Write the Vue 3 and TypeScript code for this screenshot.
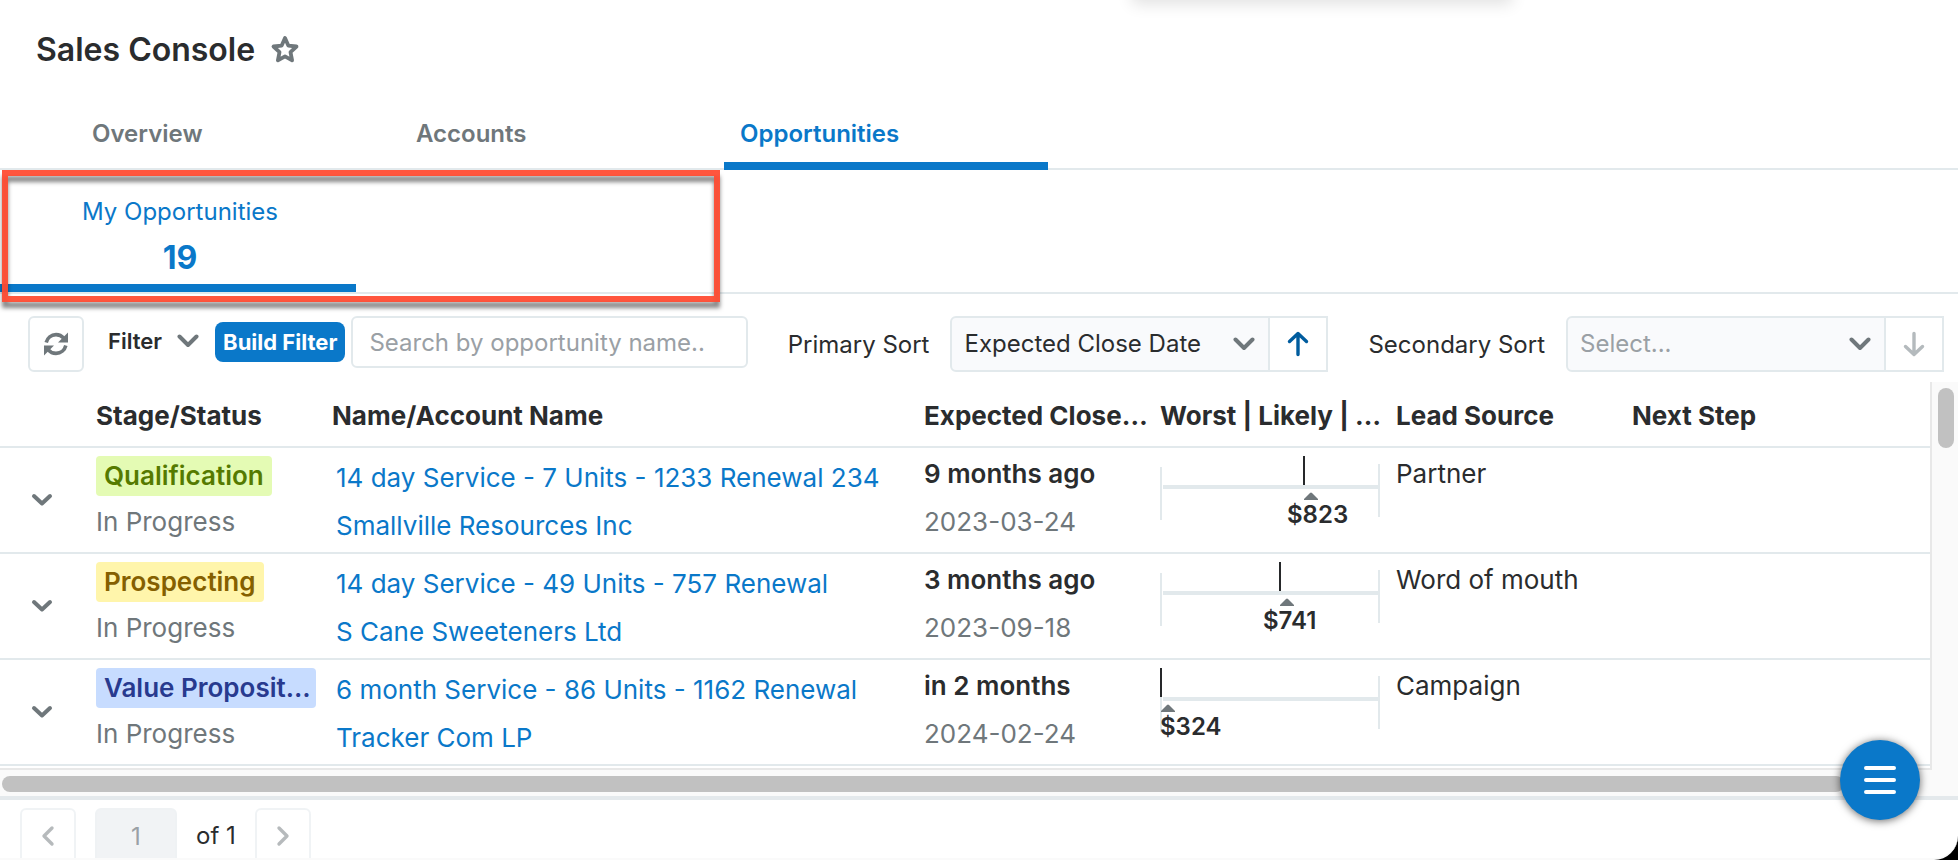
<script setup lang="ts">
import { ref } from 'vue'

interface Opportunity {
  id: number
  stage: string
  tone: 'green' | 'yellow' | 'blue'
  status: string
  name: string
  account: string
  due: string
  date: string
  likely: string
  tick: number
  labelX: number
  lead: string
}

const tabs = ['Overview', 'Accounts', 'Opportunities']
const activeTab = ref('Opportunities')
const search = ref('')
const primarySort = ref('close')
const secondarySort = ref('')
const page = ref('1')

const columns = ['Stage/Status', 'Name/Account Name', 'Expected Close…', 'Worst | Likely | …', 'Lead Source', 'Next Step']

const rows: Opportunity[] = [
  {
    id: 1, stage: 'Qualification', tone: 'green', status: 'In Progress',
    name: '14 day Service - 7 Units - 1233 Renewal 234', account: 'Smallville Resources Inc',
    due: '9 months ago', date: '2023-03-24', likely: '$823', tick: 143, labelX: 127, lead: 'Partner',
  },
  {
    id: 2, stage: 'Prospecting', tone: 'yellow', status: 'In Progress',
    name: '14 day Service - 49 Units - 757 Renewal', account: 'S Cane Sweeteners Ltd',
    due: '3 months ago', date: '2023-09-18', likely: '$741', tick: 119, labelX: 103, lead: 'Word of mouth',
  },
  {
    id: 3, stage: 'Value Proposit…', tone: 'blue', status: 'In Progress',
    name: '6 month Service - 86 Units - 1162 Renewal', account: 'Tracker Com LP',
    due: 'in 2 months', date: '2024-02-24', likely: '$324', tick: 0, labelX: 0, lead: 'Campaign',
  },
]
</script>

<template>
  <div class="console">
    <div class="top-shade"></div>
    <header class="title-bar">
      <h1>Sales Console</h1>
      <button class="star" aria-label="Add to favorites">
        <svg width="30" height="30" viewBox="0 0 30 30">
          <path d="M15 4l3.300 7.600 8.200.9-6 5.600 1.600 8.200L15 22.400l-7.100 3.900 1.600-8.200-6-5.600 8.200-.9z" fill="none" stroke="#6f777b" stroke-width="3.800" stroke-linejoin="round" />
        </svg>
      </button>
    </header>

    <nav class="tabs">
      <button v-for="t in tabs" :key="t" :class="['tab', { active: t === activeTab }]" @click="activeTab = t">{{ t }}</button>
    </nav>

    <section class="metrics">
      <button class="metric">
        <span class="metric-name">My Opportunities</span>
        <span class="metric-value">19</span>
      </button>
      <div class="highlight"></div>
    </section>

    <section class="toolbar">
      <button class="icon-btn refresh" aria-label="Refresh">
        <svg width="26" height="26" viewBox="0 0 26 26" fill="none" stroke="#6f777b" stroke-width="3.6">
          <path d="M3.2 11.5C4.300 6.800 8.200 3.600 13 3.600c3.200 0 5.800 1.300 7.700 3.600" />
          <path d="M25 1.500v10h-10z" fill="#6f777b" stroke="none" />
          <path d="M22.800 14.500c-1.100 4.700-5 7.900-9.800 7.900-3.200 0-5.800-1.300-7.700-3.600" />
          <path d="M1 24.500v-10h10z" fill="#6f777b" stroke="none" />
        </svg>
      </button>
      <button class="filter">
        Filter
        <svg width="22" height="14" viewBox="0 0 22 14"><path d="M2.500 2.500L11 11l8.500-8.500" fill="none" stroke="#6f777b" stroke-width="4" stroke-linecap="round" stroke-linejoin="round" /></svg>
      </button>
      <button class="build">Build Filter</button>
      <input v-model="search" class="search" type="text" aria-label="Search" placeholder="Search by opportunity name.." />
      <div class="sort">
        <label for="primary">Primary Sort</label>
        <div class="sort-group">
          <div class="select-wrap">
            <select id="primary" v-model="primarySort">
              <option value="close">Expected Close Date</option>
              <option value="name">Name</option>
            </select>
            <svg class="caret" width="22" height="14" viewBox="0 0 22 14"><path d="M2.500 2.500L11 11l8.500-8.500" fill="none" stroke="#6f777b" stroke-width="4" stroke-linecap="round" stroke-linejoin="round" /></svg>
          </div>
          <button class="direction" aria-label="Ascending">
            <svg width="22" height="26" viewBox="0 0 22 26" fill="none" stroke="#005c9e" stroke-width="3.400" stroke-linecap="round" stroke-linejoin="round"><path d="M11 23.500V3M2.500 10.500L11 2.500l8.500 8" /></svg>
          </button>
        </div>
      </div>
      <div class="sort">
        <label for="secondary">Secondary Sort</label>
        <div class="sort-group">
          <div class="select-wrap">
            <select id="secondary" v-model="secondarySort" class="empty">
              <option value="">Select...</option>
              <option value="name">Name</option>
            </select>
            <svg class="caret" width="22" height="14" viewBox="0 0 22 14"><path d="M2.500 2.500L11 11l8.500-8.500" fill="none" stroke="#6f777b" stroke-width="4" stroke-linecap="round" stroke-linejoin="round" /></svg>
          </div>
          <button class="direction" aria-label="Descending" disabled>
            <svg width="22" height="26" viewBox="0 0 22 26" fill="none" stroke="#b4babd" stroke-width="3.400" stroke-linecap="round" stroke-linejoin="round"><path d="M11 2.500V23M2.500 15.500l8.500 8 8.500-8" /></svg>
          </button>
        </div>
      </div>
    </section>

    <section class="grid">
      <div class="grid-body">
        <table>
          <colgroup>
            <col class="c-toggle" /><col class="c-std" /><col class="c-name" /><col class="c-std" /><col class="c-std" /><col class="c-std" /><col />
          </colgroup>
          <thead>
            <tr>
              <th aria-label="Expand"></th>
              <th v-for="c in columns" :key="c">{{ c }}</th>
            </tr>
          </thead>
          <tbody>
            <tr v-for="r in rows" :key="r.id">
              <td class="toggle-cell">
                <button class="toggle" aria-label="Expand row">
                  <svg width="22" height="14" viewBox="0 0 22 14"><path d="M3 3l8 7.500L19 3" fill="none" stroke="#6f777b" stroke-width="4" stroke-linecap="round" stroke-linejoin="round" /></svg>
                </button>
              </td>
              <td>
                <div class="stage"><span :class="['badge', r.tone]">{{ r.stage }}</span></div>
                <div class="muted status">{{ r.status }}</div>
              </td>
              <td class="name-cell">
                <a href="#">{{ r.name }}</a>
                <a href="#">{{ r.account }}</a>
              </td>
              <td>
                <div class="due">{{ r.due }}</div>
                <div class="muted">{{ r.date }}</div>
              </td>
              <td>
                <svg class="range" width="220" height="84" viewBox="0 0 220 84">
                  <path d="M0 19h2v53H0zM218 16h2v53h-2zM3 37h215v4H3z" fill="#e2e9ec" />
                  <rect :x="r.tick" y="8" width="2" height="29" fill="#26282a" />
                  <path :d="`M${r.tick + 1} 52v-1l6-6q1-1 2 0l6 6v1z`" fill="#6f777b" />
                  <text :x="r.labelX" y="75">{{ r.likely }}</text>
                </svg>
              </td>
              <td><div class="lead">{{ r.lead }}</div></td>
              <td></td>
            </tr>
          </tbody>
        </table>
      </div>
      <div class="v-track"><div class="v-thumb"></div></div>
      <div class="h-track"><div class="h-thumb"></div></div>
    </section>

    <footer class="pager">
      <button class="icon-btn faded" aria-label="Previous page" disabled>
        <svg width="14" height="22" viewBox="0 0 14 22"><path d="M11 3l-8 8 8 8" fill="none" stroke="#6f777b" stroke-width="3.400" stroke-linecap="round" stroke-linejoin="round" /></svg>
      </button>
      <input v-model="page" class="page-input" type="text" aria-label="Page" disabled />
      <span class="page-total">of 1</span>
      <button class="icon-btn faded" aria-label="Next page" disabled>
        <svg width="14" height="22" viewBox="0 0 14 22"><path d="M3 3l8 8-8 8" fill="none" stroke="#6f777b" stroke-width="3.400" stroke-linecap="round" stroke-linejoin="round" /></svg>
      </button>
    </footer>

    <button class="fab" aria-label="Open menu">
      <svg width="32" height="28" viewBox="0 0 32 28" stroke="#fff" stroke-width="4" stroke-linecap="round"><path d="M2 2h28M2 14h28M2 26h28" /></svg>
    </button>
  </div>
</template>

<style>
body {
  margin: 0;
  background: #000;
}
</style>

<style scoped>
.console {
  position: relative;
  display: flex;
  flex-direction: column;
  height: 100vh;
  box-sizing: border-box;
  overflow: hidden;
  background: #fff;
  border-bottom: 2px solid #fafafa;
  border-bottom-right-radius: 24px;
  color: #2a2c2e;
  font-family: Inter, 'Liberation Sans', sans-serif;
  font-size: 24px;
}
.console *,
.console *::before {
  box-sizing: border-box;
}
button,
input,
select {
  margin: 0;
  padding: 0;
  font: inherit;
  color: inherit;
  background: none;
  border: 0;
}
.top-shade {
  position: absolute;
  top: -24px;
  left: 58%;
  width: 19%;
  height: 20px;
  box-shadow: 0 4px 16px 4px rgba(0, 0, 0, 0.12);
}
.title-bar {
  display: flex;
  align-items: center;
  gap: 15px;
  height: 100px;
  padding: 0 36px 2px;
  flex: none;
}
h1 {
  margin: 0;
  font-size: 32px;
  font-weight: 600;
}
.star {
  display: flex;
}
.tabs {
  display: flex;
  flex: none;
  height: 70px;
  padding-left: 76px;
  border-bottom: 2px solid #e2e9ec;
}
.tab {
  width: 324px;
  height: 70px;
  padding: 4px 16px 0;
  border-bottom: 8px solid transparent;
  text-align: left;
  font-weight: 600;
  color: #6f777b;
}
.tab.active {
  color: #0a78c9;
  border-bottom-color: #0a78c9;
}
.metrics {
  position: relative;
  flex: none;
  height: 124px;
  border-bottom: 2px solid #e2e9ec;
}
.metric {
  display: flex;
  flex-direction: column;
  align-items: center;
  justify-content: flex-start;
  gap: 8px;
  width: 356px;
  height: 122px;
  padding: 26px 0 0 4px;
  border-bottom: 8px solid #0a78c9;
  color: #0a78c9;
}
.metric-name {
  line-height: 32px;
}
.metric-value {
  font-size: 32px;
  line-height: 44px;
  font-weight: 700;
}
.highlight {
  position: absolute;
  top: 0;
  left: 2px;
  width: 718px;
  height: 132px;
  border: 6px solid rgba(255, 75, 50, 0.94);
  filter: drop-shadow(0 6px 2px rgba(0, 0, 0, 0.5));
}
.toolbar {
  display: flex;
  flex: none;
  height: 88px;
  padding: 22px 14px 0 28px;
}
.icon-btn {
  display: flex;
  align-items: center;
  justify-content: center;
  width: 56px;
  height: 56px;
  border: 2px solid #e2e9ec;
  border-radius: 6px;
}
.filter {
  display: flex;
  align-items: center;
  gap: 15px;
  height: 50px;
  margin-left: 24px;
  font-size: 22px;
  font-weight: 600;
}
.build {
  height: 40px;
  margin: 6px 6px 0 16px;
  padding: 0 8px;
  border-radius: 8px;
  background: #0a78c9;
  color: #fff;
  font-size: 22px;
  font-weight: 700;
  white-space: nowrap;
}
.search {
  flex: 1;
  min-width: 0;
  height: 52px;
  padding: 0 16px;
  border: 2px solid #e2e9ec;
  border-radius: 6px;
}
.search::placeholder {
  color: #9aa0a5;
  opacity: 1;
}
.sort {
  display: flex;
  align-items: center;
  gap: 21px;
  height: 56px;
  margin-left: 40px;
  white-space: nowrap;
}
.sort-group {
  display: flex;
}
.select-wrap {
  position: relative;
}
select {
  appearance: none;
  width: 320px;
  height: 56px;
  padding: 0 12px 2px;
  border: 2px solid #e2e9ec;
  border-radius: 6px 0 0 6px;
  background: #f9fafc;
}
select.empty {
  color: #9aa0a5;
}
.caret {
  position: absolute;
  top: 21px;
  right: 15px;
  pointer-events: none;
}
.direction {
  display: flex;
  align-items: center;
  justify-content: center;
  width: 58px;
  height: 56px;
  border: 2px solid #e2e9ec;
  border-left: 0;
}
.grid {
  display: grid;
  flex: 1;
  min-height: 0;
  grid-template-columns: 1fr 28px;
  grid-template-rows: 1fr 30px;
}
.grid-body {
  min-width: 0;
  min-height: 0;
  overflow: hidden;
  border-bottom: 2px solid #e8e8e8;
}
table {
  width: 100%;
  table-layout: fixed;
  border-spacing: 0;
  font-size: 26px;
}
.c-toggle {
  width: 96px;
}
.c-std {
  width: 236px;
}
.c-name {
  width: 592px;
}
th {
  height: 66px;
  padding: 2px 8px 0 0;
  border-bottom: 2px solid #e2e9ec;
  text-align: left;
  white-space: nowrap;
  font-size: 26px;
  font-weight: 700;
}
td {
  height: 106px;
  padding: 0 16px 0 0;
  border-bottom: 2px solid #e2e9ec;
  vertical-align: top;
  line-height: 48px;
  white-space: nowrap;
}
td.toggle-cell {
  padding: 0;
  vertical-align: middle;
  line-height: 0;
}
.toggle {
  padding: 0 31px;
}
.stage {
  display: flex;
  padding-top: 8px;
}
.badge {
  height: 40px;
  max-width: 100%;
  padding: 0 8px;
  border-radius: 4px;
  line-height: 40px;
  font-weight: 600;
}
.green {
  background: #e4fbb4;
  color: #557a00;
}
.yellow {
  background: #fff5ab;
  color: #856000;
}
.blue {
  background: #c7dcff;
  color: #283a8f;
}
.muted {
  color: #6f777b;
}
.status {
  line-height: 52px;
}
td.name-cell {
  padding: 6px 16px 0 4px;
}
.name-cell a {
  display: block;
  color: #0a78c9;
  text-decoration: none;
}
.due,
.lead {
  padding-top: 2px;
}
.due {
  font-weight: 600;
}
.range {
  display: block;
}
.range text {
  font-size: 24px;
  font-weight: 600;
  fill: #2a2c2e;
}
.v-track {
  border-left: 2px solid #e8e8e8;
  background: #fafafa;
  padding: 6px 4px 0 6px;
}
.v-thumb {
  width: 16px;
  height: 60px;
  border-radius: 8px;
  background: #c1c1c1;
}
.h-track {
  grid-column: 1 / -1;
  padding: 6px 114px 0 2px;
  border-bottom: 4px solid #e4e9ec;
  background: #fafafa;
}
.h-thumb {
  height: 16px;
  border-radius: 8px;
  background: #c1c1c1;
}
.pager {
  display: flex;
  flex: none;
  height: 58px;
  padding: 8px 20px 0;
}
.faded {
  flex: none;
  opacity: 0.5;
}
.page-input {
  width: 82px;
  height: 56px;
  margin: 0 19px;
  border: 2px solid #eff2f4;
  border-radius: 6px 6px 0 0;
  background: #f1f3f5;
  color: #9aa0a5;
  text-align: center;
}
.page-total {
  margin-right: 19px;
  line-height: 56px;
}
.fab {
  position: absolute;
  right: 38px;
  bottom: 38px;
  display: flex;
  align-items: center;
  justify-content: center;
  width: 80px;
  height: 80px;
  border-radius: 50%;
  background: #0a78c9;
  box-shadow: 0 1px 8px rgba(0, 0, 0, 0.6);
}
</style>
